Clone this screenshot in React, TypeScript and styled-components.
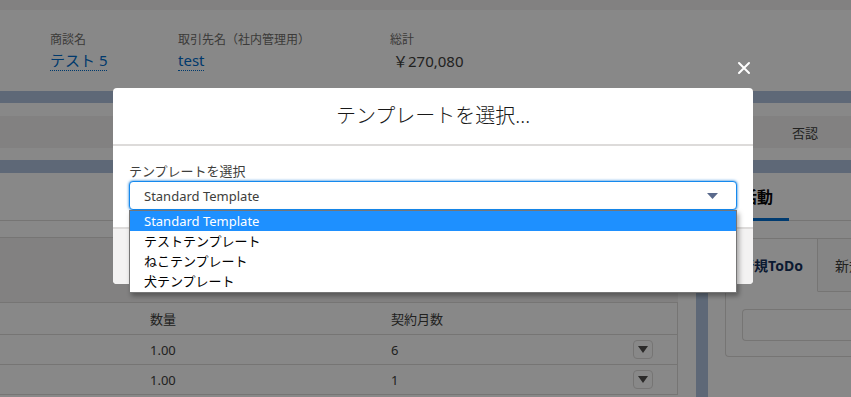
import React from "react";
import styled, { createGlobalStyle } from "styled-components";

const GlobalStyle = createGlobalStyle`
  html, body { margin: 0; padding: 0; }
  body {
    width: 851px;
    height: 397px;
    overflow: hidden;
    background: #b0c4df;
    font-family: "Noto Sans", "Noto Sans CJK JP", sans-serif;
    color: #3e3e3c;
  }
  * { box-sizing: border-box; }
`;

const Page = styled.div`
  display: flex;
  flex-direction: column;
  height: 397px;
`;

const TopStrip = styled.div`
  height: 10px;
  background: #f3f2f2;
`;

const RecordHeader = styled.header`
  height: 81px;
  background: #fff;
  display: grid;
  grid-template-columns: 128px 212px auto;
  padding: 22px 0 0 50px;
  align-content: start;
`;

const Field = styled.div`
  display: flex;
  flex-direction: column;
  align-items: flex-start;
  gap: 3px;
`;

const FieldLabel = styled.span`
  font-size: 12px;
  line-height: 16px;
  color: #706e6b;
`;

const FieldLink = styled.a`
  font-size: 15px;
  line-height: 19px;
  color: #006dcc;
  text-decoration: none;
  border-bottom: 1px dotted #006dcc;
`;

const FieldValue = styled.span<{ $indent?: number }>`
  font-size: 15px;
  line-height: 20px;
  color: #3e3e3c;
  padding-left: ${(p) => p.$indent ?? 0}px;
`;

const PathCard = styled.section`
  margin-top: 12px;
  background: #fff;
  padding: 13px 0 12px;
`;

const PathBar = styled.div`
  height: 32px;
  background: #f3f2f2;
  display: flex;
  justify-content: flex-end;
`;

const PathButton = styled.span`
  width: 92px;
  display: flex;
  align-items: center;
  justify-content: center;
  font-size: 13px;
  color: #3e3e3c;
`;

const Main = styled.div`
  margin-top: 13px;
  display: flex;
  gap: 12px;
  flex: 1;
  min-height: 0;
`;

const LeftCard = styled.section`
  width: 696px;
  flex: none;
  background: #fff;
  padding-right: 18px;
`;

const CardHead = styled.div`
  height: 48px;
  border-bottom: 1px solid #dddbda;
`;

const SubBar = styled.div`
  height: 17px;
  border-bottom: 1px solid #dddbda;
`;

const FilterBand = styled.div`
  height: 65px;
  background: #f3f2f2;
  border-bottom: 1px solid #dddbda;
`;

const Table = styled.div`
  width: 678px;
  border-right: 1px solid #dddbda;
`;

const Row = styled.div<{ $head?: boolean }>`
  display: grid;
  grid-template-columns: 150px 241px 242px 45px;
  align-items: center;
  height: ${(p) => (p.$head ? 32 : 30)}px;
  border-bottom: 1px solid #dddbda;
  font-size: 13px;
  color: #3e3e3c;
`;

const Cell = styled.span``;

const RowMenu = styled.span`
  width: 20px;
  height: 19px;
  border: 1px solid #dddbda;
  border-radius: 4px;
  display: flex;
  align-items: center;
  justify-content: center;
  svg { display: block; }
`;

const RightCard = styled.section`
  flex: 1;
  min-width: 0;
  background: #fff;
  overflow: hidden;
`;

const TabBar = styled.div`
  height: 48px;
  border-bottom: 1px solid #dddbda;
  display: flex;
  padding-left: 17px;
`;

const TabItem = styled.span`
  height: 48px;
  padding: 0 16px;
  display: flex;
  align-items: center;
  font-size: 16px;
  font-weight: 700;
  color: #080707;
  border-bottom: 3px solid #0070d2;
  white-space: nowrap;
`;

const ComposerArea = styled.div`
  padding: 17px 0 0 17px;
`;

const ComposerTabs = styled.div`
  display: flex;
`;

const ComposerTab = styled.span<{ $active?: boolean }>`
  position: relative;
  z-index: 1;
  height: 54px;
  flex: none;
  width: ${(p) => (p.$active ? 93 : 110)}px;
  padding-left: ${(p) => (p.$active ? 0 : 17)}px;
  display: flex;
  align-items: center;
  justify-content: ${(p) => (p.$active ? "center" : "flex-start")};
  font-size: 14px;
  font-weight: ${(p) => (p.$active ? 700 : 400)};
  color: ${(p) => (p.$active ? "#16325c" : "#3e3e3c")};
  background: ${(p) => (p.$active ? "#fff" : "#fafaf9")};
  border: 1px solid #dddbda;
  border-left-width: ${(p) => (p.$active ? 1 : 0)}px;
  border-bottom-color: ${(p) => (p.$active ? "#fff" : "#dddbda")};
  border-radius: ${(p) => (p.$active ? "4px 0 0 0" : "0")};
  white-space: nowrap;
`;

const ComposerPanel = styled.div`
  margin-top: -1px;
  height: 66px;
  border: 1px solid #dddbda;
  border-right: none;
  border-radius: 0 0 0 4px;
  padding: 17px 0 0 16px;
`;

const ComposerInput = styled.div`
  height: 32px;
  border: 1px solid #dddbda;
  border-right: none;
  border-radius: 4px 0 0 4px;
`;

/* ---------- modal ---------- */

const Backdrop = styled.div`
  position: fixed;
  inset: 0;
  z-index: 100;
  background: rgba(0, 0, 0, 0.465);
  display: flex;
  align-items: flex-start;
  padding: 88px 0 0 113px;
`;

const Modal = styled.div`
  position: relative;
  width: 640px;
  background: #fff;
  border-radius: 4px;
  display: flex;
  flex-direction: column;
`;

const CloseButton = styled.span`
  position: absolute;
  top: -27px;
  right: 2px;
  width: 14px;
  height: 14px;
  svg { display: block; }
`;

const ModalHeader = styled.div`
  height: 58px;
  border-bottom: 2px solid #dddbda;
  display: flex;
  align-items: center;
  justify-content: center;
`;

const ModalTitle = styled.h2`
  margin: 0;
  font-size: 20px;
  font-weight: 300;
  color: #181818;
  line-height: 26px;
`;

const ModalBody = styled.div`
  padding: 16px 16px 17px;
`;

const SelectLabel = styled.label`
  display: block;
  font-size: 13px;
  line-height: 18px;
  color: #3e3e3c;
  margin-bottom: 1px;
`;

const SelectBox = styled.div`
  position: relative;
  height: 29px;
  border: 1px solid #1589ee;
  border-radius: 4px;
  box-shadow: 0 0 3px #0070d2;
  display: flex;
  align-items: center;
  justify-content: space-between;
  padding: 0 18px 0 14px;
  font-size: 13px;
  color: #3e3e3c;
  background: #fff;
  svg { display: block; }
`;

const OptionList = styled.ul`
  position: absolute;
  top: 28px;
  left: -1px;
  right: -1px;
  margin: 0;
  padding: 0 0 1px;
  list-style: none;
  background: #fff;
  border: 1px solid #767676;
  box-shadow: 2px 3px 5px rgba(0, 0, 0, 0.35);
  z-index: 2;
`;

const OptionItem = styled.li<{ $selected?: boolean }>`
  height: 20px;
  line-height: 20px;
  padding-left: 14px;
  font-size: 13px;
  color: ${(p) => (p.$selected ? "#fff" : "#000")};
  background: ${(p) => (p.$selected ? "#1e90ff" : "#fff")};
`;

const ModalFooter = styled.div`
  height: 57px;
  border-top: 2px solid #dddbda;
  background: #f3f2f2;
  border-radius: 0 0 4px 4px;
`;

const MenuTriangle = () => (
  <svg width="10" height="7" viewBox="0 0 10 7">
    <path d="M0 0 H10 L5 7 Z" fill="#514f4d" />
  </svg>
);

const options = ["Standard Template", "テストテンプレート", "ねこテンプレート", "犬テンプレート"];

export default function App() {
  return (
    <>
      <GlobalStyle />
      <Page>
        <TopStrip />
        <RecordHeader>
          <Field>
            <FieldLabel>商談名</FieldLabel>
            <FieldLink>テスト 5</FieldLink>
          </Field>
          <Field>
            <FieldLabel>取引先名（社内管理用）</FieldLabel>
            <FieldLink>test</FieldLink>
          </Field>
          <Field>
            <FieldLabel>総計</FieldLabel>
            <FieldValue $indent={3}>￥270,080</FieldValue>
          </Field>
        </RecordHeader>
        <PathCard>
          <PathBar>
            <PathButton>否認</PathButton>
          </PathBar>
        </PathCard>
        <Main>
          <LeftCard>
            <CardHead />
            <SubBar />
            <FilterBand />
            <Table>
              <Row $head>
                <Cell />
                <Cell>数量</Cell>
                <Cell>契約月数</Cell>
                <Cell />
              </Row>
              <Row>
                <Cell />
                <Cell>1.00</Cell>
                <Cell>6</Cell>
                <RowMenu>
                  <MenuTriangle />
                </RowMenu>
              </Row>
              <Row>
                <Cell />
                <Cell>1.00</Cell>
                <Cell>1</Cell>
                <RowMenu>
                  <MenuTriangle />
                </RowMenu>
              </Row>
            </Table>
          </LeftCard>
          <RightCard>
            <TabBar>
              <TabItem>活動</TabItem>
            </TabBar>
            <ComposerArea>
              <ComposerTabs>
                <ComposerTab $active>新規ToDo</ComposerTab>
                <ComposerTab>新規行動</ComposerTab>
              </ComposerTabs>
              <ComposerPanel>
                <ComposerInput />
              </ComposerPanel>
            </ComposerArea>
          </RightCard>
        </Main>
      </Page>
      <Backdrop>
        <Modal>
          <CloseButton>
            <svg width="14" height="14" viewBox="0 0 14 14">
              <path d="M2 2 L12 12 M12 2 L2 12" stroke="#fff" strokeWidth="2" strokeLinecap="round" />
            </svg>
          </CloseButton>
          <ModalHeader>
            <ModalTitle>テンプレートを選択...</ModalTitle>
          </ModalHeader>
          <ModalBody>
            <SelectLabel>テンプレートを選択</SelectLabel>
            <SelectBox>
              <span>Standard Template</span>
              <svg width="11" height="6" viewBox="0 0 11 6">
                <path d="M0 0 H11 L5.5 6 Z" fill="#5a6a8c" />
              </svg>
              <OptionList>
                {options.map((o, i) => (
                  <OptionItem key={o} $selected={i === 0}>
                    {o}
                  </OptionItem>
                ))}
              </OptionList>
            </SelectBox>
          </ModalBody>
          <ModalFooter />
        </Modal>
      </Backdrop>
    </>
  );
}
